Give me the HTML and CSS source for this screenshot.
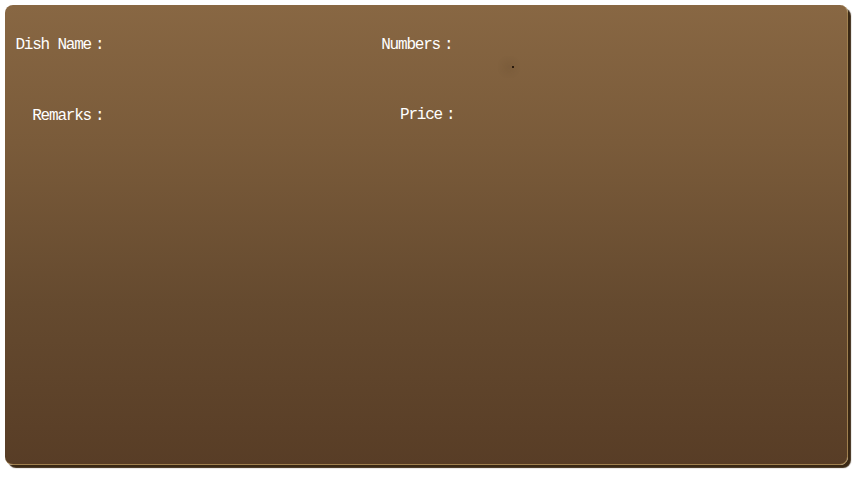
FILE: index.html
```html
<!DOCTYPE html>
<html>
<head>
<meta charset="utf-8">
<link rel="stylesheet" href="styles.css">
</head>
<body>
<div class="panel">
  <div class="form">
    <div class="label">Dish Name<span class="colon">:</span></div>
    <div class="field"></div>
    <div class="label">Numbers<span class="colon">:</span></div>
    <div class="field"></div>
    <div class="label">Remarks<span class="colon">:</span></div>
    <div class="field"></div>
    <div class="label price">Price<span class="colon">:</span></div>
    <div class="field"></div>
  </div>
  <span class="dot"></span>
</div>
</body>
</html>
```
FILE: styles.css
```css
html, body {
  margin: 0;
  padding: 0;
  background: #ffffff;
}
body {
  padding: 5px 0 0 5px;
  width: 858px;
  height: 478px;
  box-sizing: border-box;
}
.panel {
  position: relative;
  width: 843px;
  height: 460px;
  box-sizing: border-box;
  border-radius: 8px;
  background: linear-gradient(to bottom, #886743 0%, #7a5b3a 30%, #654a2f 65%, #583d26 100%);
  border-right: 1px solid #a0804f;
  border-bottom: 1px solid #a0804f;
  box-shadow: 3px 3px 1px #3a2814;
}
.form {
  display: grid;
  grid-template-columns: 90px 277px 72px 1fr;
  grid-auto-rows: 20px;
  row-gap: 51px;
  padding: 30px 0 0 9px;
  font-family: "Liberation Mono", "DejaVu Sans Mono", monospace;
  font-size: 16px;
  letter-spacing: -1.2px;
  line-height: 20px;
  color: #ffffff;
}
.label {
  text-align: right;
  white-space: nowrap;
}
.price {
  position: relative;
  top: -1px;
  left: 2px;
}
.colon {
  display: inline-block;
  width: 13px;
  text-align: left;
  padding-left: 4px;
  box-sizing: border-box;
  letter-spacing: 0;
}
.dot {
  position: absolute;
  left: 507px;
  top: 61px;
  width: 2px;
  height: 2px;
  background: #2a1a0c;
  box-shadow: -4px 0 8px 2px rgba(60, 38, 18, 0.25);
}
```
